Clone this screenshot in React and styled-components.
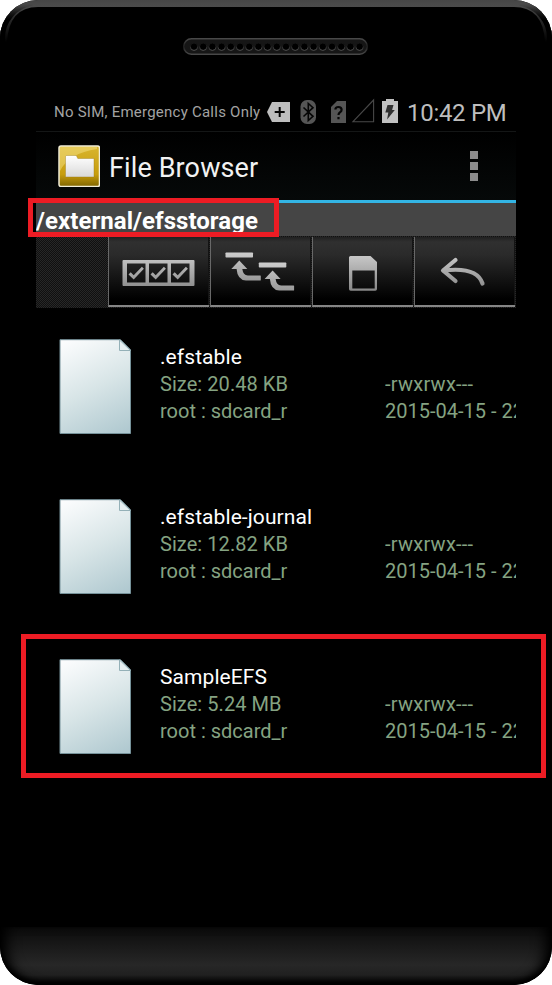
import React from 'react';
import styled, { createGlobalStyle } from 'styled-components';

const GlobalStyle = createGlobalStyle`
  * { box-sizing: border-box; }
  html, body { margin: 0; padding: 0; background: #fff; overflow: hidden; }
  svg { display: block; flex: none; }
`;

const Phone = styled.main`
  position: relative;
  width: 552px;
  height: 985px;
  display: flex;
  flex-direction: column;
  overflow: hidden;
  border-radius: 38px;
  background: #000;
  font-family: Roboto, sans-serif;
`;

const TopBezel = styled.header`
  flex: none;
  height: 92px;
  padding: 38px 1px 0 0;
  display: flex;
  justify-content: center;
  align-items: flex-start;
`;

const Screen = styled.section`
  width: 480px;
  height: 835px;
  margin: 0 36px;
  display: flex;
  flex-direction: column;
  overflow: hidden;
`;

const StatusBar = styled.div`
  height: 40px;
  flex: none;
  padding-left: 18px;
  display: flex;
  align-items: center;
  border-bottom: 1px solid #141616;
`;

const Carrier = styled.span`
  width: 213px;
  font-size: 15px;
  line-height: 20px;
  letter-spacing: ${(p) => p.$track}px;
  color: #a3a3a3;
  white-space: nowrap;
`;

const Clock = styled.span`
  margin-left: 9px;
  padding-top: 3px;
  font-size: 24px;
  line-height: 30px;
  letter-spacing: ${(p) => p.$track}px;
  color: #bebebe;
  white-space: nowrap;
`;

const TitleBar = styled.div`
  height: 71px;
  flex: none;
  padding: 0 38px 0 22px;
  display: flex;
  align-items: center;
  background: linear-gradient(#000, #060909);
  border-bottom: 3px solid #33b5e5;
`;

const Title = styled.h1`
  flex: 1;
  margin: 3px 0 0 9px;
  font-size: 27px;
  font-weight: 400;
  line-height: 32px;
  letter-spacing: ${(p) => p.$track}px;
  color: #f2f2f2;
`;

const Overflow = styled.div`
  display: grid;
  gap: 3px;
`;

const OverflowDot = styled.i`
  width: 8px;
  height: 8px;
  background: #8c8c8c;
`;

const PathBar = styled.div`
  height: 33px;
  flex: none;
  overflow: hidden;
  padding-top: 4px;
  background: #454545;
  color: #fff;
  font-size: 24px;
  font-weight: 700;
  line-height: 28px;
  letter-spacing: ${(p) => p.$track}px;
  white-space: nowrap;
`;

const Toolbar = styled.nav`
  height: 72px;
  flex: none;
  padding: 1px 0 1px 72px;
  display: grid;
  grid-template-columns: repeat(4, 102px);
  background: repeating-conic-gradient(#101010 0 25%, #272727 0 50%) 0 0 / 2px 2px;
`;

const ToolButton = styled.button`
  height: 70px;
  margin: 0 1px 0 0;
  padding: 0;
  border: 0;
  border-left: 1px solid #686868;
  border-bottom: 2px solid #858585;
  background: linear-gradient(#202020 0, #303030 5px, #2a2a2a 18px, #000 62px);
  box-shadow: inset -1px 0 #141414;
`;

const FileList = styled.div`
  display: flex;
  flex-direction: column;
`;

const FileRow = styled.article`
  height: 160px;
  padding: 31px 0 0 23px;
  display: grid;
  grid-template-columns: 101px 225px 1fr;
  align-items: start;
`;

const FileInfo = styled.div`
  padding-top: 5px;
  font-size: 20px;
  line-height: 27px;
  white-space: nowrap;
  color: #85a382;
`;

const FileName = styled.div`
  height: 27px;
  font-size: 21px;
  letter-spacing: 0.08px;
  color: #fff;
`;

const Line = styled.div`
  height: 27px;
  letter-spacing: ${(p) => p.$track || 0}px;
`;

const FileMeta = styled(FileInfo)`
  padding-top: 32px;
  width: 131px;
  overflow: hidden;
`;

const BottomBezel = styled.footer`
  flex: none;
  height: 58px;
  border-radius: 0 0 38px 38px;
  background: linear-gradient(#0b0b0b, #272727 38px, #202020 48px, #080808);
  box-shadow: inset 14px 0 13px -7px #000, inset -14px 0 13px -7px #000, inset 0 -4px 5px #000;
`;

const Highlight = styled.div`
  position: absolute;
  border: 5px solid #ed1c24;
  left: ${(p) => p.$x}px;
  top: ${(p) => p.$y}px;
  width: ${(p) => p.$w}px;
  height: ${(p) => p.$h}px;
`;

const RimLight = styled.svg`
  position: absolute;
  left: 0;
  top: 0;
`;

function Speaker() {
  return (
    <svg width="185" height="17" viewBox="0 0 185 17">
      <defs>
        <linearGradient id="rim" x2="0" y2="1">
          <stop offset="0" stopColor="#484848" />
          <stop offset=".5" stopColor="#202020" />
          <stop offset="1" stopColor="#484848" />
        </linearGradient>
        <linearGradient id="hole" x2="0" y2="1">
          <stop offset=".3" stopColor="#161616" />
          <stop offset="1" stopColor="#555" />
        </linearGradient>
      </defs>
      <rect x=".75" y=".75" width="183.5" height="15.5" rx="7.75" fill="#161616" stroke="url(#rim)" strokeWidth="1.5" />
      {Array.from({ length: 19 }, (_, i) => (
        <circle key={i} cx={11 + i * 9.2} cy="8.7" r="3.7" fill="#000" stroke="url(#hole)" />
      ))}
    </svg>
  );
}

function StatusIcons() {
  return (
    <svg width="131" height="27" viewBox="267 98 131 27">
      <path d="M267 112L272 102H290V122H272Z" fill="#bebebe" />
      <path d="M279.7 107v10M274.7 112h10" stroke="#050505" strokeWidth="2" />
      <rect x="300.5" y="100" width="15.5" height="24" rx="6.5" fill="#555" />
      <path d="M303.5 107.5l9.5 8.8-4.7 4.2v-17l4.7 4.2-9.5 8.8" fill="none" stroke="#050505" strokeWidth="1.6" />
      <path d="M331 107l6-6h9v22h-15z" fill="#555" />
      <path d="M335.4 109.5q0-2.5 3-2.5 3.2 0 3.2 2.7 0 1.5-1.7 2.7-1.4 1-1.4 2.6M338.5 117v2.2" fill="none" stroke="#050505" strokeWidth="2.2" />
      <path d="M353 121.7L373.6 100V121.7Z" fill="none" stroke="#484848" strokeWidth="1.1" />
      <path d="M382 101h4v-2h8v2h4v22h-16z" fill="#c0c0c0" />
      <path d="M387.5 105h6l-1.4 5h2.7l-7.7 9.5 1.2-7h-3z" fill="#303030" />
    </svg>
  );
}

function FolderIcon() {
  return (
    <svg width="42" height="42" viewBox="58 145 42 42">
      <defs>
        <linearGradient id="gold" x2="0" y2="1">
          <stop offset="0" stopColor="#d9b52e" />
          <stop offset=".7" stopColor="#c79d0d" />
          <stop offset="1" stopColor="#806500" />
        </linearGradient>
        <linearGradient id="paper" x2="0" y2="1">
          <stop offset="0" stopColor="#fff" />
          <stop offset="1" stopColor="#d9d9d9" />
        </linearGradient>
      </defs>
      <rect x="59" y="146" width="40.5" height="40.5" rx="2" fill="url(#gold)" stroke="#f2eed7" strokeWidth="1.5" />
      <path d="M60 147h37v2Q69 153 60 171z" fill="#fff0a0" opacity=".4" />
      <path d="M65.5 177V156.5l1-1h9.8l1.5 3H94V177z" fill="url(#paper)" stroke="#9b7b16" strokeOpacity=".5" strokeWidth=".8" />
    </svg>
  );
}

const toolRanges = { select: 109, multi: 211, card: 313, back: 415 };

function ToolIcon({ kind }) {
  const x = toolRanges[kind];
  return (
    <svg width="100" height="68" viewBox={`${x} 237 100 68`}>
      <defs>
        <linearGradient id={`silver-${kind}`} gradientUnits="userSpaceOnUse" x1="0" y1="252" x2="0" y2="292">
          <stop offset="0" stopColor="#cecece" />
          <stop offset="1" stopColor="#858585" />
        </linearGradient>
      </defs>
      {kind === 'select' && (
        <g fill={`url(#silver-${kind})`}>
          <path fillRule="evenodd" d="M123.5 260h70q1 0 1 1v24q0 1-1 1h-70q-1 0-1-1v-24q0-1 1-1zM127 263.5v19h18.5v-19zM149 263.5v19h18.5v-19zM171 263.5v19h18.5v-19z" />
          {[0, 22, 44].map((dx) => (
            <path key={dx} d={`M${128.5 + dx} 274.5l2.2-2.2 3 3 8.2-8.6 2 2-10.2 10.8z`} />
          ))}
        </g>
      )}
      {kind === 'multi' && [0, 1].map((n) => (
        <g key={n} transform={`translate(${n * 33.3} ${n * 10})`} fill={`url(#silver-${kind})`}>
          <rect x="225.5" y="252.5" width="27.5" height="5" rx=".7" />
          <path d="M239.3 260.5l8 8.5h-5q.8 6 5.5 6.5h12.5q.5 0 .5.6v3.8q0 .6-.6.6h-14.3q-8.5-.6-9.3-11.5h-5.3z" />
        </g>
      ))}
      {kind === 'card' && (
        <path fillRule="evenodd" fill="url(#silver-card)" d="M350.5 256h20l6.5 6v27q0 1.7-1.7 1.7h-24.6q-1.7 0-1.7-1.7v-31.5q0-1.5 1.5-1.5zM352.3 270.5V288.5h22.4V270.5z" />
      )}
      {kind === 'back' && (
        <g fill="none" stroke="url(#silver-back)" strokeWidth="4.2" strokeLinecap="round" strokeLinejoin="round">
          <path d="M455.5 260l-12.5 10.5 12.5 10.5" />
          <path d="M444 270.5Q477 266.5 482.5 283.5" />
        </g>
      )}
    </svg>
  );
}

function DocumentIcon() {
  return (
    <svg width="72" height="96" viewBox="0 0 72 96">
      <defs>
        <linearGradient id="doc" gradientUnits="userSpaceOnUse" x1="12" y1="0" x2="60" y2="96">
          <stop offset="0" stopColor="#fbfcfd" />
          <stop offset=".5" stopColor="#d8e5e7" />
          <stop offset="1" stopColor="#b0c9d0" />
        </linearGradient>
      </defs>
      <path d="M1 .7h60.5l10 10V94.5H1z" fill="url(#doc)" stroke="#76929a" strokeWidth="1" />
      <path d="M60.5 1v10.5h11z" fill="#e4eef0" stroke="#94b0b7" strokeWidth="1" />
    </svg>
  );
}

const files = [
  { name: '.efstable', size: '20.48 KB' },
  { name: '.efstable-journal', size: '12.82 KB' },
  { name: 'SampleEFS', size: '5.24 MB' },
];

export default function App() {
  return (
    <>
      <GlobalStyle />
      <Phone>
        <TopBezel><Speaker /></TopBezel>
        <Screen>
          <StatusBar>
            <Carrier $track={0.24}>No SIM, Emergency Calls Only</Carrier>
            <StatusIcons />
            <Clock $track={-0.3}>10:42 PM</Clock>
          </StatusBar>
          <TitleBar>
            <FolderIcon />
            <Title $track={0.12}>File Browser</Title>
            <Overflow><OverflowDot /><OverflowDot /><OverflowDot /></Overflow>
          </TitleBar>
          <PathBar $track={0.05}>/external/efsstorage</PathBar>
          <Toolbar>
            {Object.keys(toolRanges).map((kind) => (
              <ToolButton key={kind} aria-label={kind}><ToolIcon kind={kind} /></ToolButton>
            ))}
          </Toolbar>
          <FileList>
            {files.map((file) => (
              <FileRow key={file.name}>
                <DocumentIcon />
                <FileInfo>
                  <FileName>{file.name}</FileName>
                  <Line $track={0.06}>Size: {file.size}</Line>
                  <Line>root : sdcard_r</Line>
                </FileInfo>
                <FileMeta>
                  <Line $track={0.25}>-rwxrwx---</Line>
                  <Line>2015-04-15 - 22</Line>
                </FileMeta>
              </FileRow>
            ))}
          </FileList>
        </Screen>
        <BottomBezel />
        <RimLight width="552" height="44" viewBox="0 0 552 44">
          <defs>
            <linearGradient id="edge" gradientUnits="userSpaceOnUse" x1="0" y1="0" x2="0" y2="42">
              <stop offset="0" stopColor="#464646" />
              <stop offset=".15" stopColor="#4b4b4b" />
              <stop offset=".4" stopColor="#2d2d2d" />
              <stop offset="1" stopColor="#000" />
            </linearGradient>
            <linearGradient id="outer" gradientUnits="userSpaceOnUse" x1="0" y1="4" x2="0" y2="20">
              <stop offset="0" stopColor="#000" stopOpacity="0" />
              <stop offset="1" stopColor="#000" />
            </linearGradient>
          </defs>
          <path d="M0 42V0H552V42H545Q543 7 514 7H38Q9 7 7 42Z" fill="url(#edge)" />
          <path d="M1.5 42V38A36.5 36.5 0 0 1 32 2M550.5 42V38A36.5 36.5 0 0 0 520 2" fill="none" stroke="url(#outer)" strokeWidth="7" />
        </RimLight>
        <Highlight $x={28} $y={198} $w={251} $h={39} />
        <Highlight $x={21} $y={634} $w={525} $h={144} />
      </Phone>
    </>
  );
}
